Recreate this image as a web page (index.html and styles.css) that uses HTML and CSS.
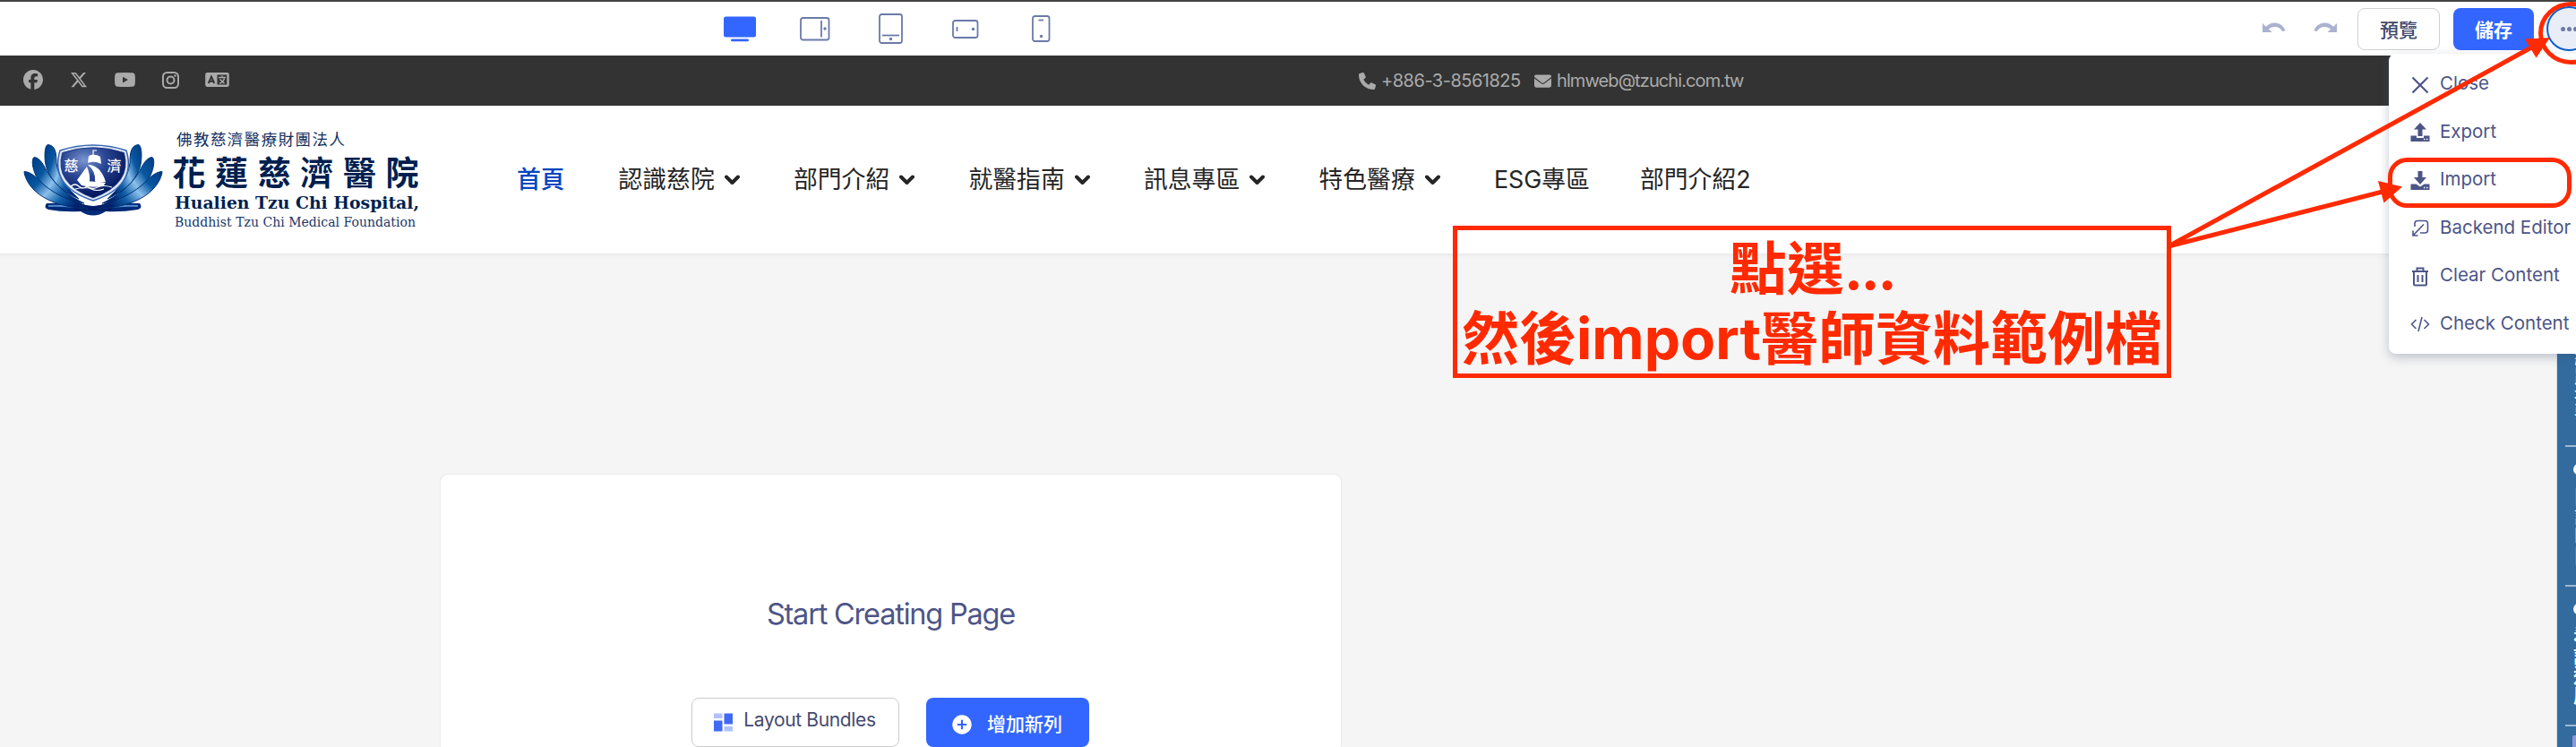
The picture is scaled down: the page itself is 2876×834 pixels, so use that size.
FILE: index.html
```html
<!DOCTYPE html>
<html lang="zh-Hant">
<head>
<meta charset="utf-8">
<title>Page Editor</title>
<link rel="stylesheet" href="styles.css">
</head>
<body>
<div class="editor">
  <div class="toolbar">
    <div class="devices">
      <svg class="device" width="36" height="29" viewBox="0 0 36 29"><rect width="36" height="23" rx="2.5" y="0.5" fill="#36f"/><rect x="8" y="25.5" width="20" height="2.8" rx="1.4" fill="#36f"/></svg>
      <svg class="device line" width="34" height="27" viewBox="0 0 34 27"><rect x="1" y="1" width="31.500" height="24.500" rx="2.500"/><path d="M24 4v18.500"/><circle class="dot" cx="28" cy="13" r="1.700"/></svg>
      <svg class="device line" width="27" height="34" viewBox="0 0 27 34"><rect x="1" y="1" width="25" height="32" rx="2.500"/><path d="M4 24.500h19"/><circle class="dot" cx="13.500" cy="28.500" r="1.700"/></svg>
      <svg class="device line" width="30" height="21" viewBox="0 0 30 21"><rect x="1" y="1" width="27.500" height="19" rx="2.500"/><path d="M5.500 8v5"/><circle class="dot" cx="23.500" cy="10.500" r="1.700"/></svg>
      <svg class="device line" width="21" height="30" viewBox="0 0 21 30"><rect x="1" y="1" width="18.500" height="28" rx="2.500"/><path d="M7.500 5.500h5.500"/><circle class="dot" cx="10.500" cy="23.500" r="1.700"/></svg>
    </div>
    <div class="actions">
      <svg class="history" width="26" height="12" viewBox="0 0 26 12"><path d="M0 1v10h10.500L6.800 7.600C12 3.600 19 4.400 22.500 10.300L25.500 9C21.500-.5 10.500-2.200 3.900 4.800z"/></svg>
      <svg class="history redo" width="26" height="12" viewBox="0 0 26 12"><path d="M26 1v10H15.500l3.700-3.400C14 3.600 7 4.400 3.500 10.300L.5 9C4.500-.5 15.500-2.200 22.100 4.800z"/></svg>
      <button class="btn preview">預覽</button>
      <button class="btn save">儲存</button>
      <button class="more" aria-label="More"><i></i><i></i><i></i></button>
    </div>
  </div>

  <div class="topbar">
    <div class="social">
      <svg width="22" height="22" viewBox="0 0 512 512"><path d="M512 256C512 114.600 397.400 0 256 0S0 114.600 0 256C0 376 82.700 476.800 194.200 504.500V334.200H141.400V256h52.800V222.300c0-87.100 39.400-127.500 125-127.500c16.200 0 44.200 3.200 55.700 6.400V172c-6-.6-16.500-1-29.600-1c-42 0-58.200 15.900-58.200 57.200V256h83.600l-14.400 78.200H287V510.100C413.800 494.800 512 386.900 512 256z"/></svg>
      <svg width="20" height="20" viewBox="0 0 512 512"><path d="M389.200 48h70.600L305.600 224.200 487 464H345L233.700 318.600 106.500 464H35.800L200.700 275.500 26.800 48H172.400L272.900 180.900 389.200 48zM364.400 421.800h39.100L151.100 88h-42L364.400 421.800z"/></svg>
      <svg width="23" height="16" viewBox="0 0 23 16"><path fill-rule="evenodd" d="M3.500.3Q11.500-.3 19.500.3Q22.400.5 22.700 3.300Q23.200 8 22.700 12.700Q22.400 15.500 19.500 15.700Q11.500 16.300 3.500 15.700Q.6 15.500.3 12.700Q-.2 8 .3 3.300Q.6.500 3.500.3zM9 4.800v6.600L15 8.100z"/></svg>
      <svg class="insta" width="19" height="19" viewBox="0 0 19 19"><rect x="1" y="1" width="17" height="17" rx="4.500"/><circle cx="9.500" cy="9.500" r="4"/><circle class="flash" cx="14.500" cy="4.500" r="1.200"/></svg>
      <svg width="27" height="16" viewBox="0 0 27 16"><path fill-rule="evenodd" d="M2.500 0h22A2.300 2.300 0 0 1 26.800 2.300v11.400A2.300 2.300 0 0 1 24.500 16h-22A2.300 2.300 0 0 1 .2 13.700V2.300A2.300 2.300 0 0 1 2.500 0zM13.500 2.500v11h10.800v-11z"/><path class="cut" d="M3.700 12 7 4.500l3.300 7.500M5 9.800h4"/><path class="glyph" d="M15 5.500h8M19 3.500v2M16.500 7.500l5 4.500M21.500 6.500q-1.500 4.500-5.500 5.700"/></svg>
    </div>
    <div class="contact">
      <svg width="19" height="19" viewBox="0 0 512 512"><path d="M164.900 24.600c-7.700-18.600-28-28.500-47.400-23.200l-88 24C12.100 30.200 0 46 0 64C0 311.400 200.600 512 448 512c18 0 33.800-12.100 38.600-29.500l24-88c5.300-19.400-4.600-39.700-23.200-47.400l-96-40c-16.300-6.800-35.200-2.100-46.300 11.600L304.700 368C234.300 334.700 177.300 277.700 144 207.300L193.300 167c13.700-11.200 18.400-30 11.600-46.300l-40-96z"/></svg>
      <span class="phone">+886-3-8561825</span>
      <svg width="19" height="19" viewBox="0 0 512 512"><path d="M48 64C21.500 64 0 85.500 0 112c0 15.100 7.100 29.300 19.200 38.400L236.800 313.600c11.400 8.500 27 8.500 38.400 0L492.800 150.400c12.100-9.100 19.200-23.300 19.200-38.400c0-26.500-21.500-48-48-48H48zM0 176V384c0 35.300 28.700 64 64 64H448c35.300 0 64-28.700 64-64V176L294.400 339.200c-22.800 17.100-54 17.100-76.800 0L0 176z"/></svg>
      <span class="mail">hlmweb@tzuchi.com.tw</span>
    </div>
  </div>

  <header class="site-header">
    <svg class="logo" width="460" height="126" viewBox="20 140 460 126">
      <defs>
        <linearGradient id="petal" x1="0" y1="0" x2="1" y2=".6"><stop offset="0" stop-color="#003a85"/><stop offset=".3" stop-color="#0857a0"/><stop offset=".52" stop-color="#8cc0ec"/><stop offset=".75" stop-color="#1261aa"/><stop offset="1" stop-color="#001f6b"/></linearGradient>
        <radialGradient id="shield" cx=".36" cy=".25" r=".75"><stop offset="0" stop-color="#7a96d0"/><stop offset=".45" stop-color="#2a4694"/><stop offset="1" stop-color="#00135a"/></radialGradient>
        <g id="petals">
          <path d="M53 161.500C62 162 63 171 63 182C65 199 76 211 88 222C67 213 53 198 50.500 181C49.500 172 50 164 53 161.500z"/>
          <path d="M38 175.500C45 176 49 185 54 194C63 208 77 219 94 227C68 222 48 211 40 196C36 187 35 178 38 175.500z"/>
          <path d="M27 191.500C36 192 42 200 50 207C64 219 80 224 98 233C70 232 48 223 37 211C30 204 27 195 27 191.500z"/>
        </g>
      </defs>
      <path d="M52 227Q78 226 104 230Q130 226 156 227Q160 232 154 234Q135 237 118 236Q111 240.500 104 240.500Q97 240.500 90 236Q70 237 54 234Q48 232 52 227z" fill="#002a78"/>
      <path d="M54 230Q76 229 98 233M154 230Q132 229 110 233" stroke="#4f8fce" stroke-width="2" fill="none"/>
      <path d="M66 205Q80 227 104 231Q128 227 142 205L124 235H84z" fill="#001a63"/>
      <g fill="url(#petal)" stroke="#003477" stroke-width="1"><use href="#petals"/><use href="#petals" transform="translate(208 0) scale(-1 1)"/></g>
      <path d="M67 168Q104 156 141 168Q153 208 104 224Q55 208 67 168z" fill="#dfe9fa" stroke="#3a65b0" stroke-width="1.500"/>
      <path d="M69.500 170.500Q104 159 138.500 170.500Q148 205 104 221Q60 205 69.500 170.500z" fill="url(#shield)" stroke="#18367f" stroke-width=".8"/>
      <g fill="#fff"><path d="M99 174Q106 171 112 175L113 183Q105 179 98 182zM98 184Q112 184 118 203Q107 205 106 202Q107 191 98 184zM97 186Q101 195 100 203Q90 202 86 201zM86 201l32 3-3 4q-14 2-24-1z"/></g>
      <path d="M104 174v-6h4M79 208q5-4 9 0t9 0q6 4 12 1t16 0M84 211q12-3 18 0t14 0" fill="none" stroke="#fff" stroke-width="1.200"/>
      <g class="crest"><text x="71.500" y="190.500">慈</text><text x="119.500" y="190.500">濟</text></g>
      <g class="logo-cjk">
        <text x="197" y="161.500" font-size="17.500" textLength="188">佛教慈濟醫療財團法人</text>
        <text class="name" x="192.500" y="206.500" font-size="37" textLength="275">花蓮慈濟醫院</text>
      </g>
      <g class="logo-latin">
        <text class="hospital" x="195" y="232.500" font-size="19" textLength="273" lengthAdjust="spacingAndGlyphs">Hualien Tzu Chi Hospital,</text>
        <text x="195" y="252.500" font-size="15" textLength="269" lengthAdjust="spacingAndGlyphs">Buddhist Tzu Chi Medical Foundation</text>
      </g>
    </svg>
    <nav class="nav">
      <a class="active">首頁</a>
      <a>認識慈院<svg class="chev" width="17" height="12" viewBox="0 0 17 12"><path d="M2 2.500 8.500 9 15 2.500"/></svg></a>
      <a>部門介紹<svg class="chev" width="17" height="12" viewBox="0 0 17 12"><path d="M2 2.500 8.500 9 15 2.500"/></svg></a>
      <a>就醫指南<svg class="chev" width="17" height="12" viewBox="0 0 17 12"><path d="M2 2.500 8.500 9 15 2.500"/></svg></a>
      <a>訊息專區<svg class="chev" width="17" height="12" viewBox="0 0 17 12"><path d="M2 2.500 8.500 9 15 2.500"/></svg></a>
      <a>特色醫療<svg class="chev" width="17" height="12" viewBox="0 0 17 12"><path d="M2 2.500 8.500 9 15 2.500"/></svg></a>
      <a>ESG專區</a>
      <a>部門介紹2</a>
    </nav>
  </header>

  <main class="canvas">
    <section class="starter">
      <h1>Start Creating Page</h1>
      <div class="starter-actions">
        <button class="btn bundles"><svg width="21" height="21" viewBox="0 0 21 21"><path fill="#b0c1fb" d="M0 .5h9.500V6H0zM11.500 15H21v5.500h-9.500z"/><path fill="#3f6af5" d="M0 8.500h9.500v12H0zM11.500.5H21v12h-9.500z"/></svg><span>Layout Bundles</span></button>
        <button class="btn addrow"><svg width="22" height="22" viewBox="0 0 22 22"><circle cx="11" cy="11" r="10.700" fill="#fff"/><path d="M11 5.800v10.400M5.800 11h10.400" stroke="#36f" stroke-width="2.200"/></svg><span>增加新列</span></button>
      </div>
    </section>
  </main>

  <aside class="quick">
    <div class="quick-item"><i></i><span>網路掛號</span></div>
    <div class="quick-item"><i></i><span>門診時間</span></div>
    <div class="quick-item bold"><i></i><span>看診進度</span></div>
    <div class="quick-item tint"><i></i></div>
  </aside>

  <ul class="menu">
    <li><svg width="22" height="22" viewBox="0 0 22 22"><path class="stroke x" d="M2.500 2.500l17 17M19.500 2.500l-17 17"/></svg>Close</li>
    <li><svg width="22" height="22" viewBox="0 0 22 22"><path d="M11 0 18 7.500h-4.500V15h-5V7.500H4zM.5 14.500h6.500v2.500h8v-2.500h6.500V21H.5z"/><path d="M15 18.500h1.500M18 18.500h1.500" stroke="#fff" stroke-width="1.300"/></svg>Export</li>
    <li><svg width="22" height="22" viewBox="0 0 22 22"><path d="M8.500 0h5v7H18l-7 8-7-8h4.500zM.5 14.500h6l4.500 3 4.500-3h6V21H.5z"/><path d="M15 18.500h1.500M18 18.500h1.500" stroke="#fff" stroke-width="1.300"/></svg>Import</li>
    <li><svg width="22" height="22" viewBox="0 0 22 22"><path class="stroke" d="M5 9V5.500Q5 2.500 8 2.500h8.500Q19.500 2.500 19.500 5.500V13q0 3-3 3H11M15 6.500 3 19M3 13.500V19h5.500"/></svg>Backend Editor</li>
    <li><svg width="22" height="22" viewBox="0 0 22 22"><path class="stroke trash" d="M2 5h18M7.500 4.500V1.500h7v3M4 5.500V19.500q0 1 1 1h12q1 0 1-1V5.500M8.500 9v8M13.500 9v8"/></svg>Clear Content</li>
    <li><svg width="22" height="22" viewBox="0 0 22 22"><path class="stroke" d="M6.500 6 1.500 11l5 5M15.500 6l5 5-5 5M13 3 9 19"/></svg>Check Content</li>
  </ul>

  <div class="note"><p>點選<span class="dots">...</span></p><p>然後import醫師資料範例檔</p></div>
  <svg class="marks" width="2876" height="834" viewBox="0 0 2876 834">
    <g class="outline"><ellipse cx="2870.500" cy="37" rx="34" ry="32.500"/><rect x="2668.500" y="178.500" width="200" height="51" rx="19"/><path d="M2421 275 2828 52M2421 275 2660 214"/></g>
    <path class="head" d="M2847 42 2819 43.500 2831.500 64.500zM2682 208.500 2655 202 2661.500 226.500z"/>
  </svg>
</div>
</body>
</html>
```

FILE: styles.css
```css
* { box-sizing: border-box; }
body { margin: 0; background: #f5f5f5; font-family: Inter, "Noto Sans CJK TC", sans-serif; }
p, h1, ul { margin: 0; padding: 0; }
svg { display: block; flex: none; }
button { font-family: inherit; cursor: pointer; }

.editor { position: relative; width: 2876px; height: 834px; overflow: hidden; }

.toolbar { display: flex; justify-content: space-between; height: 62px; border-top: 2px solid #444; background: #fff; }
.devices { display: flex; align-items: center; padding-left: 808px; gap: 0; }
.device:nth-child(1) { margin-right: 49px; }
.device:nth-child(2) { margin-right: 54px; }
.device:nth-child(3) { margin-right: 55px; }
.device:nth-child(4) { margin-right: 59px; }
.line { fill: none; stroke: #6b7aa8; stroke-width: 1.8; }
.line .dot { fill: #6b7aa8; stroke: none; }
.actions { display: flex; align-items: center; width: 350px; flex: none; }
.history { fill: #aab2cf; margin-bottom: 3px; }
.redo { margin-left: 31px; }
.btn { display: flex; align-items: center; justify-content: center; border-radius: 8px; font-size: 21px; padding: 0; white-space: nowrap; }
.preview { width: 92px; height: 47px; margin-left: 23px; flex: none; background: #fff; border: 1px solid #d0d0d0; color: #41486b; font-weight: 500; }
.save { width: 90px; height: 47px; margin-left: 15px; flex: none; background: #36f; border: 0; color: #fff; font-weight: 700; }
.preview, .save { padding-bottom: 1px; }
.more { display: flex; align-items: center; justify-content: center; gap: 2px; width: 50px; height: 50px; margin-left: 14px; flex: none; padding: 0; border: 2px solid #0860cf; border-radius: 50%; background: #e9edf7; }
.more i { width: 5px; height: 5px; border-radius: 50%; background: #6d7aa8; }

.topbar { display: flex; height: 56px; background: #333; color: #aaa; font-size: 20px; line-height: 56px; }
.topbar svg { fill: #aaa; }
.social { display: flex; align-items: center; width: 1517px; padding-left: 26px; padding-bottom: 2px; }
.social svg:nth-child(2) { margin-left: 30px; }
.social svg:nth-child(3) { margin-left: 30px; }
.social svg:nth-child(4) { margin-left: 30px; }
.social svg:nth-child(5) { margin-left: 29px; }
.social .insta { fill: none; stroke: #aaa; stroke-width: 2; }
.social .flash { fill: #aaa; stroke: none; }
.cut { fill: none; stroke: #333; stroke-width: 1.9; }
.glyph { fill: none; stroke: #aaa; stroke-width: 1.4; }
.contact { display: flex; align-items: center; }
.phone { width: 171px; margin-left: 6px; letter-spacing: -.5px; }
.phone + svg { margin-right: 6px; }
.mail { letter-spacing: -.9px; }

.site-header { display: flex; height: 166px; padding: 22px 0 0 20px; background: #fff; border-bottom: 1px solid #eaeaea; box-shadow: 0 1px 5px rgba(0, 0, 0, .05); }
.crest { fill: #fff; font: 500 16px "Noto Sans CJK TC", sans-serif; }
.logo-cjk { fill: #14305f; font-family: "Noto Sans CJK TC", sans-serif; }
.logo-cjk .name { font-weight: 700; fill: #001f4f; }
.logo-latin { fill: #1a3768; font-family: "DejaVu Serif", serif; }
.logo-latin .hospital { font-weight: 700; fill: #001f4f; }
.nav { display: grid; grid-template-columns: 113.5px 195.5px 195.5px 195.5px 195.5px 195.5px 163px 140px; margin-left: 97px; height: 116px; align-items: center; font-size: 26.8px; color: #252525; }
.nav a { display: flex; align-items: center; white-space: nowrap; }
.nav .active { color: #0345bf; font-weight: 500; }
.chev { margin: 5px 0 0 11px; fill: none; stroke: #252525; stroke-width: 4; stroke-linejoin: round; stroke-linecap: round; }

.canvas { padding: 246px 0 0 492px; }
.starter { width: 1005px; height: 310px; padding-top: 134px; background: #fff; border-radius: 8px; box-shadow: 0 0 2px rgba(0, 0, 0, .14); display: flex; flex-direction: column; align-items: center; }
.starter h1 { font-size: 32.5px; line-height: 44px; font-weight: 400; color: #4d5587; letter-spacing: -1.2px; }
.starter-actions { display: flex; gap: 30px; margin-top: 71px; padding-right: 2px; }
.starter-actions .btn { height: 55px; }
.bundles { width: 232px; gap: 12px; background: #fff; border: 1px solid #ccc; color: #454b6e; }
.bundles span { padding-bottom: 6px; letter-spacing: -.35px; }
.addrow { width: 182px; gap: 17px; background: #36f; border: 0; color: #fff; font-weight: 500; }
.addrow svg { margin-top: 4px; }

.quick { position: absolute; left: 2854px; top: 343px; width: 90px; background: #336b9e; border-left: 1px solid #d2deea; }
.quick-item { height: 156px; margin-left: 9px; padding: 18px 0 0 9px; border-bottom: 2px solid #9db9d3; color: #fff; font-size: 22px; }
.quick-item i { display: block; width: 16px; height: 14px; border-radius: 50%; background: #fff; }
.quick-item span { display: block; margin: 12px 0 0 -1px; writing-mode: vertical-rl; line-height: 22px; }
.bold span { font-weight: 700; margin-left: -2px; }
.tint { padding: 10px 0 0 8px; }
.tint i { height: 40px; border-radius: 2px; background: #8f96d8; }

.menu { position: absolute; left: 2667px; top: 60px; width: 240px; height: 335px; padding-top: 6px; list-style: none; background: #fff; border-radius: 8px; box-shadow: 0 4px 12px rgba(60, 75, 110, .3); }
.menu li { display: flex; align-items: center; gap: 11px; height: 53.5px; padding-left: 24px; font-size: 20.5px; color: #4d5587; white-space: nowrap; }
.menu svg { fill: #4d5587; margin-top: 4px; }
.menu .stroke { fill: none; stroke: #4d5587; stroke-width: 1.6; }
.menu .x { stroke-width: 2.2; }
.menu .trash { stroke-width: 2; }

.note { position: absolute; left: 1622px; top: 252px; width: 802px; height: 170px; padding-top: 4px; border: 5px solid #ff2a00; color: #ff2a00; font-size: 64px; font-weight: 700; line-height: 78px; text-align: center; white-space: nowrap; }
.dots { letter-spacing: -2.5px; }
.marks { position: absolute; left: 0; top: 0; pointer-events: none; }
.outline { fill: none; stroke: #ff2a00; stroke-width: 5; }
.head { fill: #ff2a00; }
```
